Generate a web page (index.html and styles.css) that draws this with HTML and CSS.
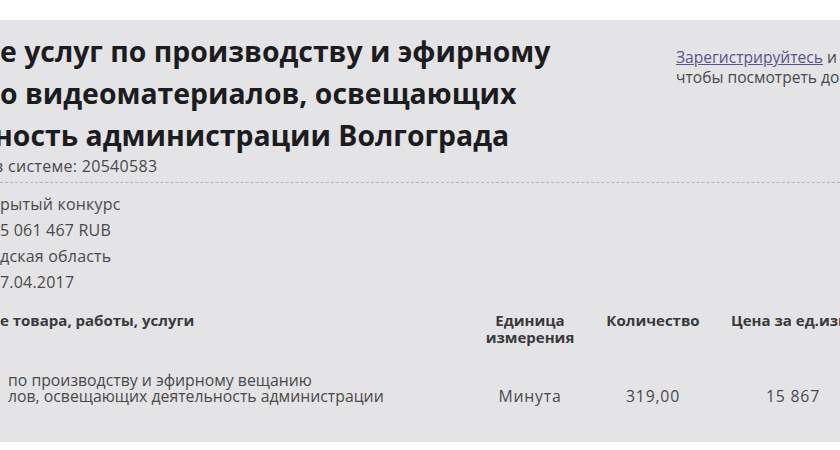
FILE: index.html
```html
<!DOCTYPE html>
<html lang="ru">
<head>
<meta charset="utf-8">
<title>Закупка</title>
<link rel="stylesheet" href="styles.css">
</head>
<body>
<div class="topbar"></div>
<div class="panel">
  <div class="main">
    <h1 class="title"><span class="ln">е услуг по производству и эфирному</span><span class="ln">о видеоматериалов, освещающих</span><span class="ln ln-cut">ность администрации Волгограда</span></h1>
    <div class="regnum"><span class="cut">в</span> системе: 20540583</div>
    <div class="facts">
      <div class="fact">рытый конкурс</div>
      <div class="fact">5 061 467 RUB</div>
      <div class="fact">дская область</div>
      <div class="fact">7.04.2017</div>
    </div>
    <table class="items">
      <thead>
        <tr>
          <th class="c-name">е товара, работы, услуги</th>
          <th class="c-unit">Единица<br>измерения</th>
          <th class="c-qty">Количество</th>
          <th class="c-price">Цена за ед.изм.</th>
        </tr>
      </thead>
      <tbody>
        <tr>
          <td class="c-name">по производству и эфирному вещанию<br>лов, освещающих деятельность администрации</td>
          <td class="c-unit v">Минута</td>
          <td class="c-qty v">319,00</td>
          <td class="c-price v">15 867</td>
        </tr>
      </tbody>
    </table>
  </div>
  <div class="side">
    <a class="reg-link" href="#">Зарегистрируйтесь</a> и<br>чтобы посмотреть дополнительную информацию
  </div>
</div>
</body>
</html>
```
FILE: styles.css
```css
html, body {
  margin: 0;
  padding: 0;
  background: #ffffff;
  overflow: hidden;
}
body {
  font-family: "Open Sans", "Noto Sans", sans-serif;
  color: #4a4a4c;
  width: 840px;
  height: 450px;
}
.topbar {
  height: 20px;
  background: #ffffff;
}
.panel {
  height: 422px;
  background: #e4e3e6;
  display: flex;
  overflow: hidden;
}
.main {
  flex: 0 0 676px;
  min-width: 0;
}
.title {
  margin: 10px 0 0 0;
  font-size: 28.4px;
  line-height: 42px;
  font-weight: 700;
  color: #1c1c1e;
  white-space: nowrap;
}
.ln {
  display: block;
}
.ln-cut {
  margin-left: -6px;
}
.regnum {
  font-size: 16px;
  line-height: 20px;
  letter-spacing: 0.3px;
  color: #4a4a4c;
  white-space: nowrap;
  margin-left: -6px;
}
.facts {
  margin-top: 6px;
  border-top: 1px dashed #b4b3b8;
  width: 900px;
  padding-top: 8px;
}
.fact {
  font-size: 16px;
  line-height: 26px;
  letter-spacing: 0.2px;
  color: #4a4a4c;
  white-space: nowrap;
}
.items {
  border-collapse: collapse;
  margin-top: 17px;
  width: 860px;
  table-layout: fixed;
}
.items th, .items td {
  padding: 0;
  white-space: nowrap;
}
.items th {
  font-size: 15px;
  font-weight: 700;
  color: #3a3a3c;
  line-height: 17px;
  vertical-align: top;
  text-align: center;
}
.items td {
  font-size: 15.8px;
  color: #4a4a4c;
  line-height: 16px;
  vertical-align: top;
  padding-top: 26px;
  text-align: center;
}
.items td.v {
  padding-top: 42px;
  letter-spacing: 0.8px;
}
.items .c-name {
  width: 480px;
  text-align: left;
}
.items td.c-name {
  padding-left: 8px;
}
.items .c-unit { width: 100px; }
.items .c-qty { width: 146px; }
.items .c-price { width: 134px; }
.side {
  flex: 1 1 auto;
  min-width: 0;
  padding-top: 27px;
  font-size: 15.6px;
  line-height: 20px;
  color: #4a4a4c;
  white-space: nowrap;
}
.reg-link {
  color: #5c5290;
  text-decoration: underline;
}
```
